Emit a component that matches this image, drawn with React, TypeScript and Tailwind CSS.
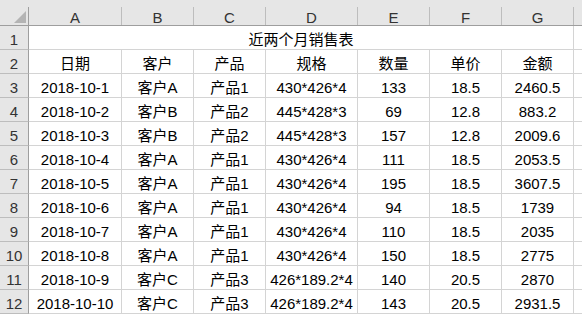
import React from 'react';

const cols = [
  { key: 'A', w: 'w-[93px]' },
  { key: 'B', w: 'w-[72px]' },
  { key: 'C', w: 'w-[72px]' },
  { key: 'D', w: 'w-[92px]' },
  { key: 'E', w: 'w-[72px]' },
  { key: 'F', w: 'w-[72px]' },
  { key: 'G', w: 'w-[72px]' },
];

const head = ['日期', '客户', '产品', '规格', '数量', '单价', '金额'];

const rows = [
  ['2018-10-1', '客户A', '产品1', '430*426*4', '133', '18.5', '2460.5'],
  ['2018-10-2', '客户B', '产品2', '445*428*3', '69', '12.8', '883.2'],
  ['2018-10-3', '客户B', '产品2', '445*428*3', '157', '12.8', '2009.6'],
  ['2018-10-4', '客户A', '产品1', '430*426*4', '111', '18.5', '2053.5'],
  ['2018-10-5', '客户A', '产品1', '430*426*4', '195', '18.5', '3607.5'],
  ['2018-10-6', '客户A', '产品1', '430*426*4', '94', '18.5', '1739'],
  ['2018-10-7', '客户A', '产品1', '430*426*4', '110', '18.5', '2035'],
  ['2018-10-8', '客户A', '产品1', '430*426*4', '150', '18.5', '2775'],
  ['2018-10-9', '客户C', '产品3', '426*189.2*4', '140', '20.5', '2870'],
  ['2018-10-10', '客户C', '产品3', '426*189.2*4', '143', '20.5', '2931.5'],
];

function RowHead({ n }: { n: number }) {
  return (
    <div className="w-[29px] shrink-0 h-full bg-[#e6e6e6] border-r border-r-[#9e9e9e] border-b border-b-[#bdbdbd] flex items-end justify-center leading-[17px] pb-[1px] text-[#333]">
      {n}
    </div>
  );
}

function Cell({ w, children }: { w: string; children?: React.ReactNode }) {
  return (
    <div className={`${w} shrink-0 h-full border-r border-b border-[#d4d4d4] flex items-end justify-center leading-[17px] pb-[1px] whitespace-nowrap`}>
      {children}
    </div>
  );
}

function Row({ n, cells }: { n: number; cells: string[] }) {
  return (
    <div className="flex h-[24px]">
      <RowHead n={n} />
      {cols.map((c, i) => (
        <Cell key={c.key} w={c.w}>{cells[i]}</Cell>
      ))}
      <div className="flex-1 h-full border-b border-[#d4d4d4]" />
    </div>
  );
}

export default function App() {
  return (
    <div className="w-[582px] h-[314px] overflow-hidden bg-white text-black text-[15px] font-['Liberation_Sans','Noto_Sans_CJK_SC',sans-serif]">
      {/* column letters */}
      <div className="flex h-[26px] bg-[#e6e6e6] border-b border-[#9e9e9e] text-[#333]">
        <div className="w-[29px] shrink-0 pt-[7px]">
          <div className="h-full border-r border-[#9e9e9e] flex items-end justify-end pr-[2px] pb-[2px]">
            <svg width="12" height="12" viewBox="0 0 12 12">
              <polygon points="12,0 12,12 0,12" fill="#b4b4b4" />
            </svg>
          </div>
        </div>
        {cols.map((c) => (
          <div key={c.key} className={`${c.w} shrink-0 pt-[7px]`}>
            <div className="h-full border-r border-[#bdbdbd] flex items-end justify-center leading-[14px]">
              {c.key}
            </div>
          </div>
        ))}
        <div className="flex-1" />
      </div>

      {/* title row */}
      <div className="flex h-[24px]">
        <RowHead n={1} />
        <div className="w-[545px] shrink-0 h-full border-r border-b border-[#d4d4d4] flex items-end justify-center leading-[17px] pb-[1px]">
          近两个月销售表
        </div>
        <div className="flex-1 h-full border-b border-[#d4d4d4]" />
      </div>

      <Row n={2} cells={head} />
      {rows.map((r, i) => (
        <Row key={i} n={i + 3} cells={r} />
      ))}
    </div>
  );
}
